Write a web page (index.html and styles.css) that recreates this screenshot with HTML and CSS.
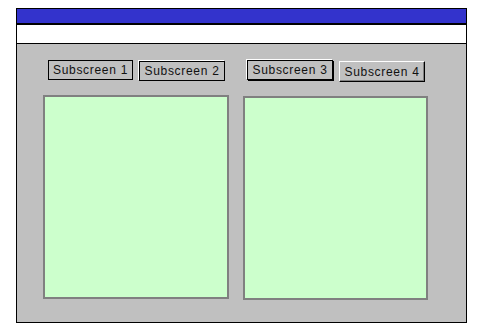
FILE: index.html
```html
<!DOCTYPE html>
<html lang="en">
<head>
  <meta charset="UTF-8">
  <meta name="viewport" content="width=device-width, initial-scale=1.0">
  <title>Subscreens</title>
  <link rel="stylesheet" href="styles.css">
</head>
<body>

  <div class="window">
    <div class="title-bar"></div>
    <div class="menu-bar"></div>

    <div class="workspace">
      <div class="column">
        <div class="tabs">
          <button class="tab tab-flat">Subscreen 1</button>
          <button class="tab tab-lit">Subscreen 2</button>
        </div>
        <div class="panel"></div>
      </div>

      <div class="column column-right">
        <div class="tabs">
          <button class="tab tab-focus">Subscreen 3</button>
          <button class="tab tab-raised">Subscreen 4</button>
        </div>
        <div class="panel"></div>
      </div>
    </div>
  </div>

</body>
</html>
```

FILE: styles.css
```css
* {
  margin: 0;
  padding: 0;
  box-sizing: border-box;
}

body {
  font-family: "Liberation Sans", Arial, sans-serif;
  background-color: #ffffff;
  overflow: hidden;
}

.window {
  margin: 8px 0 0 16px;
  width: 451px;
  height: 315px;
  border: 1px solid #000000;
  display: flex;
  flex-direction: column;
}

.title-bar {
  height: 14px;
  background-color: #3333cc;
  border-bottom: 2px solid #000000;
  box-sizing: content-box;
}

.menu-bar {
  height: 19px;
  background-color: #ffffff;
  border-bottom: 1px solid #000000;
}

.workspace {
  flex: 1;
  background-color: #c0c0c0;
  display: flex;
  gap: 14px;
  padding: 16px 0 0 26px;
}

.column {
  width: 186px;
  display: flex;
  flex-direction: column;
}

.column-right {
  width: 185px;
}

.tabs {
  display: flex;
  gap: 6px;
  padding-left: 5px;
  height: 21px;
}

.column-right .tabs {
  padding-left: 4px;
}

.tab {
  width: 85px;
  height: 20px;
  font-family: "Liberation Sans", Arial, sans-serif;
  font-size: 12px;
  letter-spacing: 0.7px;
  color: #111111;
  background-color: #c0c0c0;
  border: 1px solid #000000;
  line-height: 18px;
  text-align: center;
}

.tab-lit {
  width: 86px;
  margin-top: 1px;
  box-shadow: -1px -1px 0 #ffffff;
}

.tab-focus {
  width: 86px;
  box-shadow: -1px -1px 0 #ffffff, 1px 1px 0 #000000;
}

.tab-raised {
  width: 86px;
  margin-top: 1px;
  height: 21px;
  border-color: #ffffff #000000 #000000 #ffffff;
  box-shadow: inset -1px -1px 0 #808080;
}

.panel {
  margin-top: 14px;
  height: 204px;
  background-color: #ccffcc;
  border: 2px solid #808080;
}

.column-right .panel {
  margin-top: 15px;
}
```
